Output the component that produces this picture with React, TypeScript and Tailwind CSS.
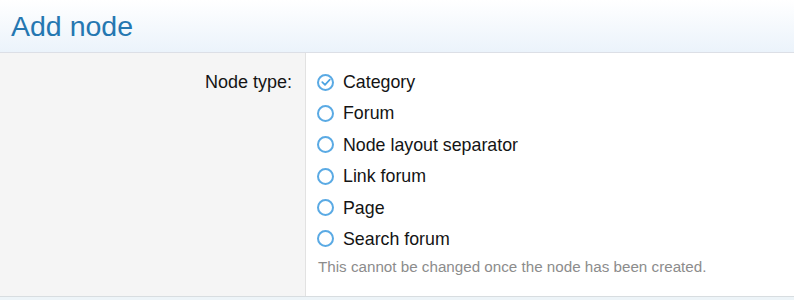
import React from "react";

const options = [
  "Category",
  "Forum",
  "Node layout separator",
  "Link forum",
  "Page",
  "Search forum",
];

export default function App() {
  return (
    <div className="w-[794px] h-[300px] overflow-hidden bg-white" style={{ fontFamily: '"Liberation Sans", Arial, sans-serif' }}>
      <div className="h-[53px] border-b border-[#dcdfe6] bg-gradient-to-b from-white to-[#ebf3fb] pl-[11px] flex items-center">
        <h1 className="text-[28.5px] leading-none text-[#2577b1] pt-[1px]">Add node</h1>
      </div>
      <div className="flex h-[244px] border-b border-[#d8dde0]">
        <div className="w-[306px] shrink-0 bg-[#f5f5f5] border-r border-[#e2e2e2] pr-[13px] pt-[17px] text-right">
          <span className="text-[18px] leading-[24px] text-[#141414]">Node type:</span>
        </div>
        <div className="flex-1 pl-[11px] pt-[17px]">
          <div className="flex flex-col gap-[7.4px]">
            {options.map((o, i) => (
              <div key={o} className="flex items-center h-[24px]">
                <span className="w-[17px] h-[17px] rounded-full border-2 border-[#5aaae4] flex items-center justify-center shrink-0">
                  {i === 0 && (
                    <svg width="10" height="10" viewBox="0 0 10 10">
                      <path d="M1.3 5.2 L4 7.8 L8.8 2.6" fill="none" stroke="#4aa3e2" strokeWidth="1.7" strokeLinecap="round" strokeLinejoin="round" />
                    </svg>
                  )}
                </span>
                <span className="ml-[9px] text-[17.8px] leading-[24px] text-[#141414]">{o}</span>
              </div>
            ))}
          </div>
          <div className="mt-[6px] pl-[1px] text-[15.2px] leading-[20px] text-[#8c8c8c]">
            This cannot be changed once the node has been created.
          </div>
        </div>
      </div>
      <div className="h-[3px] bg-[#edf4f8]" />
    </div>
  );
}
